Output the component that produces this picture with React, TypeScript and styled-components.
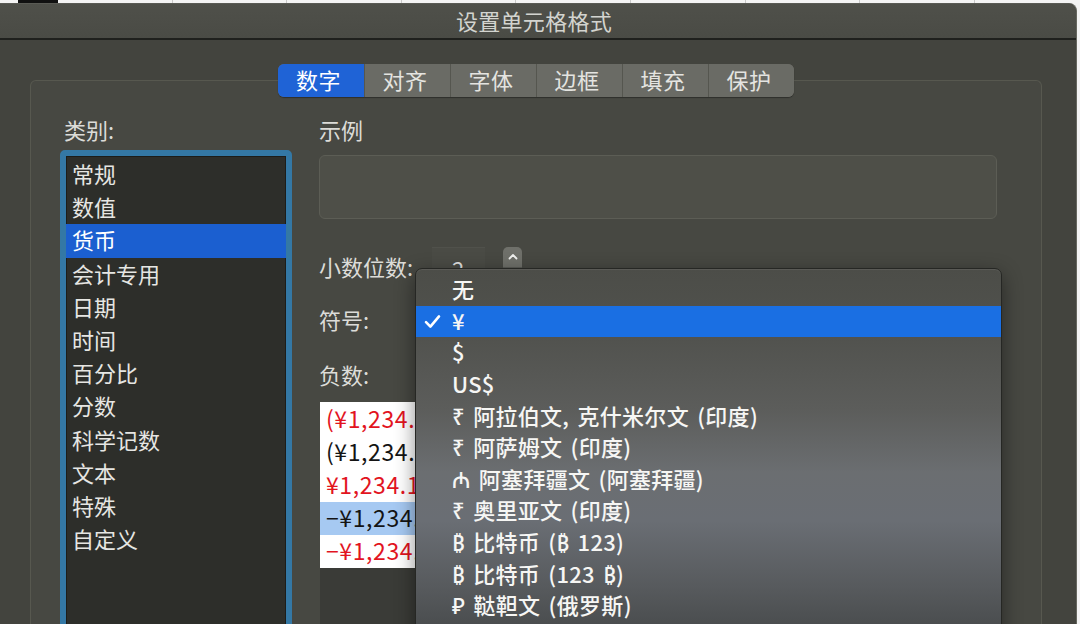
import styled, { createGlobalStyle } from "styled-components";

const GlobalStyle = createGlobalStyle`
  html, body {
    margin: 0;
    padding: 0;
    background: #f3f3f3;
  }
  body {
    font-family: "Noto Sans CJK SC", "Noto Sans", "DejaVu Sans", sans-serif;
  }
`;

type Negative = { text: string; red?: boolean; selected?: boolean };

const tabs = ["数字", "对齐", "字体", "边框", "填充", "保护"];

const categories = [
  "常规",
  "数值",
  "货币",
  "会计专用",
  "日期",
  "时间",
  "百分比",
  "分数",
  "科学记数",
  "文本",
  "特殊",
  "自定义",
];

const negatives: Negative[] = [
  { text: "(¥1,234.10)", red: true },
  { text: "(¥1,234.10)" },
  { text: "¥1,234.10", red: true },
  { text: "−¥1,234.10", selected: true },
  { text: "−¥1,234.10", red: true },
];

const symbols = [
  "无",
  "¥",
  "$",
  "US$",
  "₹ 阿拉伯文, 克什米尔文 (印度)",
  "₹ 阿萨姆文 (印度)",
  "₼ 阿塞拜疆文 (阿塞拜疆)",
  "₹ 奥里亚文 (印度)",
  "₿ 比特币 (₿ 123)",
  "₿ 比特币 (123 ₿)",
  "₽ 鞑靼文 (俄罗斯)",
];

const CheckMark = () => (
  <svg width="17" height="17" viewBox="0 0 17 17">
    <path
      d="M2 9.2 L6.4 13.6 L15 3.4"
      fill="none"
      stroke="#ffffff"
      strokeWidth="2.6"
      strokeLinecap="round"
      strokeLinejoin="round"
    />
  </svg>
);

const Chevron = ({ down }: { down?: boolean }) => (
  <svg width="10" height="7" viewBox="0 0 10 7">
    <path
      d={down ? "M1.5 1.5 L5 5 L8.5 1.5" : "M1.5 5.5 L5 2 L8.5 5.5"}
      fill="none"
      stroke="#f0f0ee"
      strokeWidth="1.8"
      strokeLinecap="round"
      strokeLinejoin="round"
    />
  </svg>
);

const FormatCellsDialog = () => {
  const selectedCategory = 2;
  const selectedSymbol = 1;

  return (
    <Page>
      <GlobalStyle />
      <SheetStrip>
        <ActiveCell />
      </SheetStrip>
      <Window>
        <TitleBar>设置单元格格式</TitleBar>
        <Body>
          <TabBar>
            {tabs.map((tab, i) => (
              <Tab key={tab} $active={i === 0}>
                {tab}
              </Tab>
            ))}
          </TabBar>
          <GroupBox>
            <Column>
              <FieldLabel $indent>类别:</FieldLabel>
              <CategoryList>
                {categories.map((name, i) => (
                  <CategoryItem key={name} $selected={i === selectedCategory}>
                    {name}
                  </CategoryItem>
                ))}
              </CategoryList>
            </Column>
            <Column>
              <FieldLabel>示例</FieldLabel>
              <SampleBox />
              <DecimalRow>
                <RowLabel>小数位数:</RowLabel>
                <SpinInput>2</SpinInput>
                <Stepper>
                  <StepHalf>
                    <Chevron />
                  </StepHalf>
                  <StepHalf>
                    <Chevron down />
                  </StepHalf>
                </Stepper>
              </DecimalRow>
              <SymbolRow>
                <RowLabel>符号:</RowLabel>
              </SymbolRow>
              <NegativeLabelRow>
                <RowLabel>负数:</RowLabel>
              </NegativeLabelRow>
              <NegativeList>
                {negatives.map((n, i) => (
                  <NegativeItem key={i} $red={n.red} $selected={n.selected}>
                    {n.text}
                  </NegativeItem>
                ))}
              </NegativeList>
            </Column>
          </GroupBox>
        </Body>

        <SymbolMenu>
          {symbols.map((s, i) => (
            <MenuItem key={s} $selected={i === selectedSymbol}>
              <CheckSlot>{i === selectedSymbol && <CheckMark />}</CheckSlot>
              {s}
            </MenuItem>
          ))}
        </SymbolMenu>
      </Window>
    </Page>
  );
};

export default function App() {
  return <FormatCellsDialog />;
}

const Page = styled.div`
  position: relative;
  width: 1080px;
  height: 624px;
  overflow: hidden;
  display: flex;
  flex-direction: column;
  background: #f3f3f3;
`;

const SheetStrip = styled.div`
  height: 3px;
  flex-shrink: 0;
  position: relative;
  background-color: #f4f4f4;
  background-image: repeating-linear-gradient(
    90deg,
    transparent 0 57px,
    #c9c9c9 57px 58px,
    transparent 58px 114.6px
  );
`;

const ActiveCell = styled.div`
  position: absolute;
  left: 18px;
  top: 0;
  width: 40px;
  height: 3px;
  background: #111;
`;

const Window = styled.div`
  position: relative;
  flex: 1;
  margin: 0 3px 0 -8px;
  background: #43443e;
  border-right: 1px solid #66675f;
  border-top: 1px solid #5a5b55;
  border-radius: 0 8px 0 0;
  display: flex;
  flex-direction: column;
`;

const TitleBar = styled.div`
  height: 36px;
  flex-shrink: 0;
  box-sizing: border-box;
  display: flex;
  align-items: center;
  justify-content: center;
  padding-bottom: 3px;
  background: linear-gradient(180deg, #4f504a 0%, #4a4b45 100%);
  border-bottom: 2px solid #1f201d;
  border-radius: 0 8px 0 0;
  color: #d3d4cf;
  font-size: 22px;
  letter-spacing: 0.3px;
`;

const Body = styled.div`
  flex: 1;
  display: flex;
  flex-direction: column;
  padding: 24px 34px 0 38px;
`;

const TabBar = styled.div`
  position: relative;
  z-index: 1;
  align-self: center;
  display: flex;
  height: 33px;
  border-radius: 6px;
  overflow: hidden;
  background: #6a6b65;
  box-shadow: 0 1px 1px rgba(0, 0, 0, 0.35);
`;

const Tab = styled.div<{ $active?: boolean }>`
  width: 86px;
  box-sizing: border-box;
  display: flex;
  align-items: center;
  justify-content: center;
  padding: 0 5px 4px 0;
  font-size: 22px;
  letter-spacing: 0.5px;
  color: ${(p) => (p.$active ? "#ffffff" : "#e4e4e0")};
  background: ${(p) => (p.$active ? "#1f63d6" : "#6a6b65")};
  & + & {
    border-left: 1px solid #55564f;
  }
`;

const GroupBox = styled.div`
  flex: 1;
  margin-top: -17px;
  padding: 33px 0 0 29px;
  background: #474842;
  border: 1px solid #57584f;
  border-bottom: none;
  border-radius: 6px 6px 0 0;
  display: grid;
  grid-template-columns: 232px 678px;
  column-gap: 27px;
  align-items: start;
`;

const Column = styled.div`
  display: flex;
  flex-direction: column;
`;

const FieldLabel = styled.div<{ $indent?: boolean }>`
  height: 30px;
  line-height: 30px;
  padding-left: ${(p) => (p.$indent ? "4px" : "0")};
  font-size: 22px;
  color: #dcdcd8;
  margin-bottom: 6px;
`;

const CategoryList = styled.div`
  height: 480px;
  border: 6px solid #3478a5;
  border-radius: 5px;
  padding-top: 2px;
  background: #2d2e2a;
  box-shadow: inset 0 0 0 1px #1c1d1a;
`;

const CategoryItem = styled.div<{ $selected?: boolean }>`
  height: 33.2px;
  box-sizing: border-box;
  display: flex;
  align-items: center;
  padding: 0 0 3px 6px;
  font-size: 22px;
  color: ${(p) => (p.$selected ? "#ffffff" : "#e6e6e3")};
  background: ${(p) => (p.$selected ? "#1b5fd0" : "transparent")};
`;

const SampleBox = styled.div`
  height: 62px;
  margin-top: 5px;
  background: #4e4f48;
  border: 1px solid #5c5d55;
  border-radius: 6px;
`;

const DecimalRow = styled.div`
  height: 40px;
  margin-top: 28px;
  display: flex;
  align-items: center;
`;

const RowLabel = styled.div`
  width: 113px;
  padding-bottom: 3px;
  font-size: 22px;
  color: #dcdcd8;
  line-height: 30px;
`;

const SpinInput = styled.div`
  width: 53px;
  height: 40px;
  box-sizing: border-box;
  padding-left: 20px;
  line-height: 40px;
  font-size: 22px;
  color: #dedede;
  background: #4a4b45;
  border-top: 1px solid #50514b;
`;

const Stepper = styled.div`
  margin-left: 18px;
  width: 19px;
  height: 40px;
  border-radius: 5px;
  overflow: hidden;
  background: #6f706a;
  display: flex;
  flex-direction: column;
`;

const StepHalf = styled.div`
  flex: 1;
  display: flex;
  align-items: center;
  justify-content: center;
  & + & {
    border-top: 1px solid #5b5c56;
  }
`;

const SymbolRow = styled.div`
  height: 40px;
  margin-top: 13px;
  display: flex;
  align-items: center;
`;

const NegativeLabelRow = styled.div`
  height: 34px;
  margin-top: 18px;
  display: flex;
  align-items: center;
`;

const NegativeList = styled.div`
  width: 190px;
  height: 240px;
  margin-top: 10px;
  margin-left: 1px;
  background: #3a3b37;
`;

const NegativeItem = styled.div<{ $red?: boolean; $selected?: boolean }>`
  height: 33.2px;
  box-sizing: border-box;
  display: flex;
  align-items: center;
  padding: 0 0 2px 6px;
  font-size: 23px;
  letter-spacing: 0.6px;
  white-space: nowrap;
  color: ${(p) => (p.$red ? "#e2141f" : "#141414")};
  background: ${(p) => (p.$selected ? "#a6c9f2" : "#ffffff")};
`;

const SymbolMenu = styled.div`
  position: absolute;
  z-index: 2;
  top: 264px;
  left: 423px;
  width: 587px;
  height: 372px;
  padding-top: 5px;
  box-sizing: border-box;
  border: 1px solid #262724;
  border-radius: 7px 7px 0 0;
  background: linear-gradient(
    180deg,
    #4c4d48 0%,
    #51524e 18%,
    #5c5d5b 38%,
    #6b6e71 55%,
    #6a6e74 68%,
    #575a5d 86%,
    #46494a 100%
  );
  box-shadow: 0 6px 20px rgba(0, 0, 0, 0.45), inset 0 1px 0 rgba(255, 255, 255, 0.08);
  overflow: hidden;
`;

const MenuItem = styled.div<{ $selected?: boolean }>`
  height: 31.6px;
  box-sizing: border-box;
  display: flex;
  align-items: center;
  padding: 0 0 3px 8px;
  font-size: 22px;
  font-weight: 500;
  letter-spacing: 0.3px;
  word-spacing: 3px;
  color: #f6f6f4;
  white-space: nowrap;
  background: ${(p) => (p.$selected ? "#1a6fe3" : "transparent")};
`;

const CheckSlot = styled.span`
  width: 28px;
  padding-top: 3px;
  display: flex;
  align-items: center;
`;
